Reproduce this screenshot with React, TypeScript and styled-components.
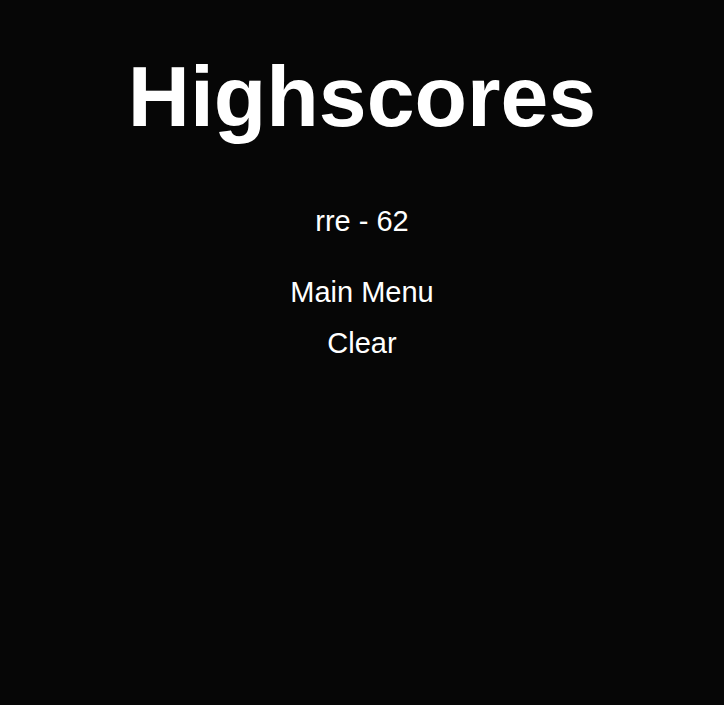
import React from "react";
import styled, { createGlobalStyle } from "styled-components";

const Global = createGlobalStyle`
  html, body { margin: 0; padding: 0; background: #060606; }
  body { font-family: "Liberation Sans", Arial, sans-serif; color: #fff; min-height: 705px; }
`;

const Page = styled.div`
  display: flex;
  flex-direction: column;
  align-items: center;
  min-height: 705px;
  background: #060606;
`;

const Title = styled.h1`
  margin: 46px 0 0;
  font-size: 86px;
  line-height: 100px;
  font-weight: 700;
  color: #fff;
`;

const ScoreList = styled.ul`
  list-style: none;
  padding: 0;
  margin: 55px 0 0;
`;

const ScoreItem = styled.li`
  font-size: 29px;
  line-height: 40px;
  text-align: center;
`;

const Menu = styled.div`
  display: flex;
  flex-direction: column;
  align-items: center;
  margin-top: 31px;
  gap: 11px;
`;

const MenuButton = styled.button`
  background: none;
  border: none;
  padding: 0;
  color: #fff;
  font-family: "Liberation Sans", Arial, sans-serif;
  font-size: 29px;
  line-height: 40px;
  cursor: pointer;
`;

export default function App() {
  return (
    <>
      <Global />
      <Page>
        <Title>Highscores</Title>
        <ScoreList>
          <ScoreItem>rre - 62</ScoreItem>
        </ScoreList>
        <Menu>
          <MenuButton>Main Menu</MenuButton>
          <MenuButton>Clear</MenuButton>
        </Menu>
      </Page>
    </>
  );
}
